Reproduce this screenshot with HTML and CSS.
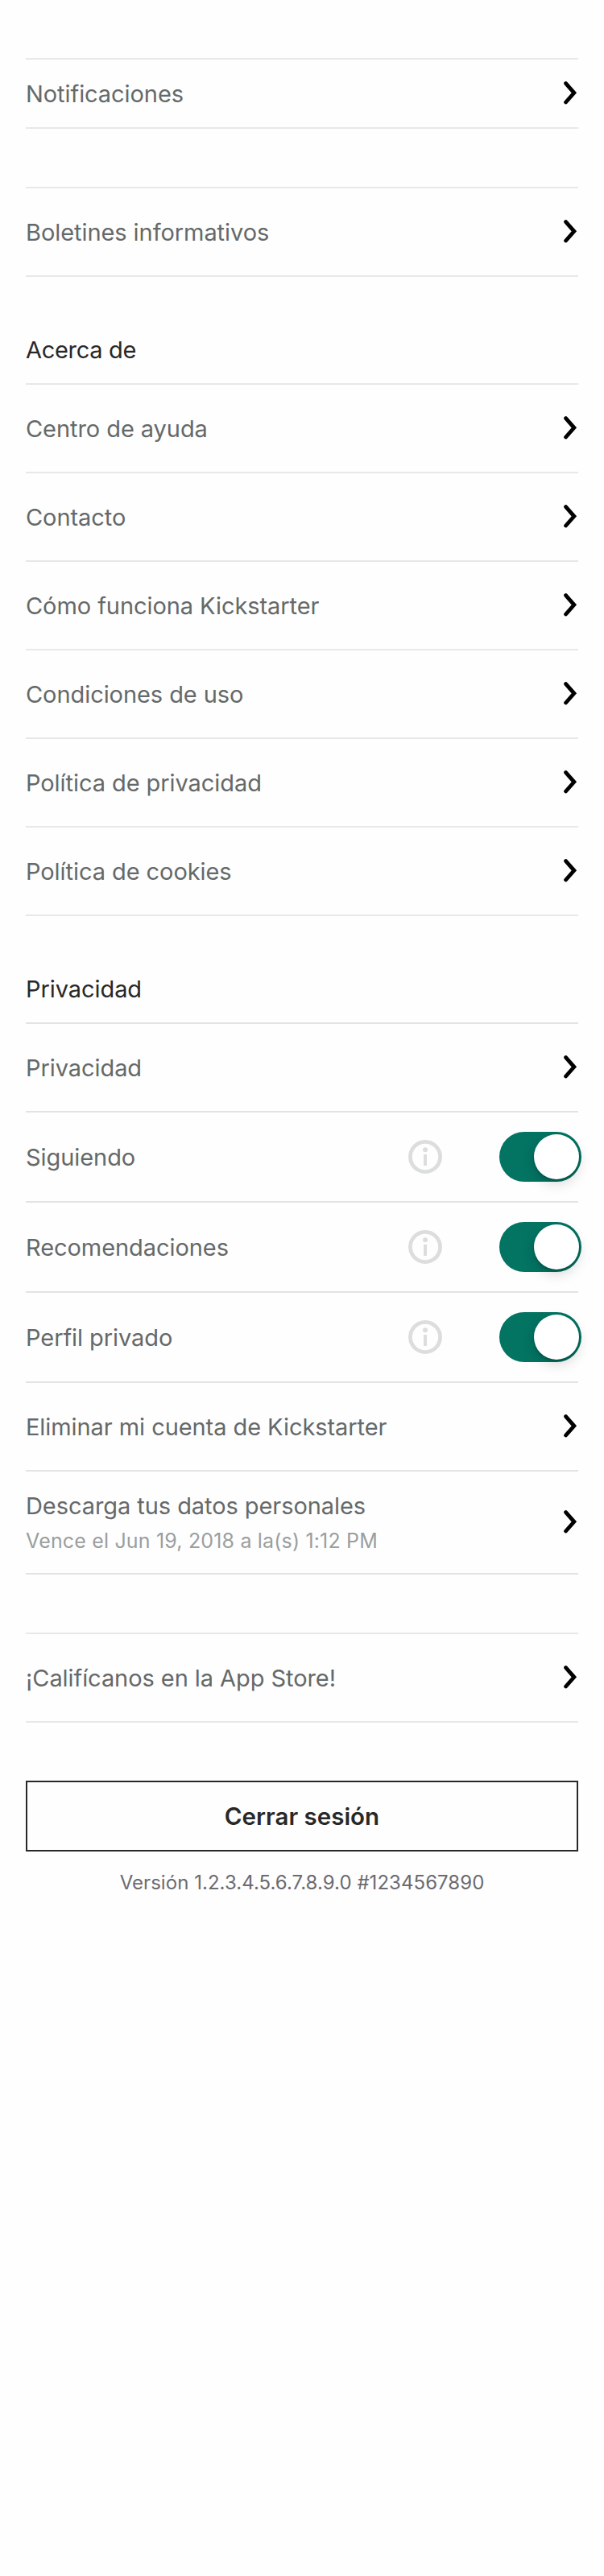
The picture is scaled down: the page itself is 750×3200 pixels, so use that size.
FILE: index.html
```html
<!DOCTYPE html>
<html lang="es">
<head>
<meta charset="utf-8">
<title>Ajustes</title>
<link rel="stylesheet" href="styles.css">
</head>
<body>
<svg class="symbols" aria-hidden="true">
  <symbol id="chevron" viewBox="0 0 18 30"><path d="M2.6 2.6 12.9 14.3 2.6 26" fill="none" stroke="#000" stroke-width="4.8" stroke-linecap="round"/></symbol>
  <symbol id="info" viewBox="0 0 42 42"><circle cx="21" cy="21" r="18.6" fill="none" stroke="#dcdede" stroke-width="4.8"/><circle cx="21" cy="12.3" r="3" fill="#dcdede"/><path d="M19 18h4v14h-4z" fill="#dcdede"/></symbol>
</svg>
<main class="settings">
  <section class="group">
    <a class="row row--compact"><span class="label">Notificaciones</span><svg class="chevron"><use href="#chevron"/></svg></a>
  </section>

  <section class="group">
    <a class="row"><span class="label">Boletines informativos</span><svg class="chevron"><use href="#chevron"/></svg></a>
  </section>

  <h2 class="heading heading--tight">Acerca de</h2>
  <section class="group group--titled">
    <a class="row"><span class="label">Centro de ayuda</span><svg class="chevron"><use href="#chevron"/></svg></a>
    <a class="row"><span class="label">Contacto</span><svg class="chevron"><use href="#chevron"/></svg></a>
    <a class="row"><span class="label">Cómo funciona Kickstarter</span><svg class="chevron"><use href="#chevron"/></svg></a>
    <a class="row"><span class="label">Condiciones de uso</span><svg class="chevron"><use href="#chevron"/></svg></a>
    <a class="row"><span class="label">Política de privacidad</span><svg class="chevron"><use href="#chevron"/></svg></a>
    <a class="row"><span class="label">Política de cookies</span><svg class="chevron"><use href="#chevron"/></svg></a>
  </section>

  <h2 class="heading">Privacidad</h2>
  <section class="group group--titled group--privacy">
    <a class="row"><span class="label">Privacidad</span><svg class="chevron"><use href="#chevron"/></svg></a>
    <div class="row row--switch"><span class="label">Siguiendo</span><svg class="info"><use href="#info"/></svg><span class="switch"><span class="knob"></span></span></div>
    <div class="row row--switch"><span class="label">Recomendaciones</span><svg class="info"><use href="#info"/></svg><span class="switch"><span class="knob"></span></span></div>
    <div class="row row--switch"><span class="label">Perfil privado</span><svg class="info"><use href="#info"/></svg><span class="switch"><span class="knob"></span></span></div>
    <a class="row"><span class="label">Eliminar mi cuenta de Kickstarter</span><svg class="chevron"><use href="#chevron"/></svg></a>
    <a class="row row--double"><span class="stack"><span class="label">Descarga tus datos personales</span><span class="detail">Vence el Jun 19, 2018 a la(s) 1:12 PM</span></span><svg class="chevron"><use href="#chevron"/></svg></a>
  </section>

  <section class="group">
    <a class="row"><span class="label">¡Califícanos en la App Store!</span><svg class="chevron"><use href="#chevron"/></svg></a>
  </section>

  <button class="logout" type="button">Cerrar sesión</button>
  <p class="version">Versión 1.2.3.4.5.6.7.8.9.0 #1234567890</p>
</main>
</body>
</html>
```
FILE: styles.css
```css
* { box-sizing: border-box; }

body {
  margin: 0;
  min-height: 3200px;
  background: #fefefe;
  font-family: Inter, "Liberation Sans", sans-serif;
  font-size: 29px;
  line-height: 36px;
  letter-spacing: -0.07px;
  color: #656969;
}

.symbols { display: none; }

.settings {
  display: flex;
  flex-direction: column;
  padding: 0 32px;
}

.group {
  --line: #e8e8e8;
  margin-top: 72px;
  border-top: 2px solid var(--line);
}
.group--titled { margin-top: 0; }
.group--privacy { --line: #e3e3e3; }

.row {
  display: flex;
  align-items: center;
  height: 110px;
  border-bottom: 2px solid var(--line);
}
.row--compact { height: 86px; }
.row--switch { height: 112px; }
.row--double { height: 128px; }

.label {
  flex: 1;
  padding-top: 2px;
}

.stack {
  flex: 1;
  display: flex;
  flex-direction: column;
  gap: 9px;
}
.stack .label {
  flex: none;
  padding-top: 1px;
}

.detail {
  font-size: 25px;
  line-height: 32px;
  letter-spacing: 0.17px;
  color: #9b9e9e;
}

.chevron {
  flex: none;
  width: 18px;
  height: 30px;
}

.info {
  flex: none;
  width: 42px;
  height: 42px;
  margin-right: 71px;
}

/* The switch overhangs the row's right edge slightly. */
.switch {
  flex: none;
  display: flex;
  justify-content: flex-end;
  width: 102px;
  height: 62px;
  margin-right: -4px;
  padding: 3px;
  border-radius: 31px;
  background: #037362;
}
.knob {
  width: 56px;
  height: 56px;
  border-radius: 50%;
  background: #fff;
  box-shadow: 0 6px 16px rgba(0, 0, 0, 0.15), 0 2px 3px rgba(0, 0, 0, 0.2);
}

.heading {
  margin: 0;
  padding: 73px 0 23px;
  font-size: 29px;
  font-weight: 400;
  color: #282828;
}
.heading--tight { letter-spacing: -0.3px; }

.logout {
  height: 88px;
  margin-top: 72px;
  padding: 0;
  border: 2px solid #282828;
  background: transparent;
  font: 600 29.5px/36px Inter, "Liberation Sans", sans-serif;
  letter-spacing: 0;
  color: #282828;
}

.version {
  margin: 25px 0 0;
  font-size: 24px;
  line-height: 28px;
  letter-spacing: 0.04px;
  text-align: center;
  color: #6b6b70;
}
```
